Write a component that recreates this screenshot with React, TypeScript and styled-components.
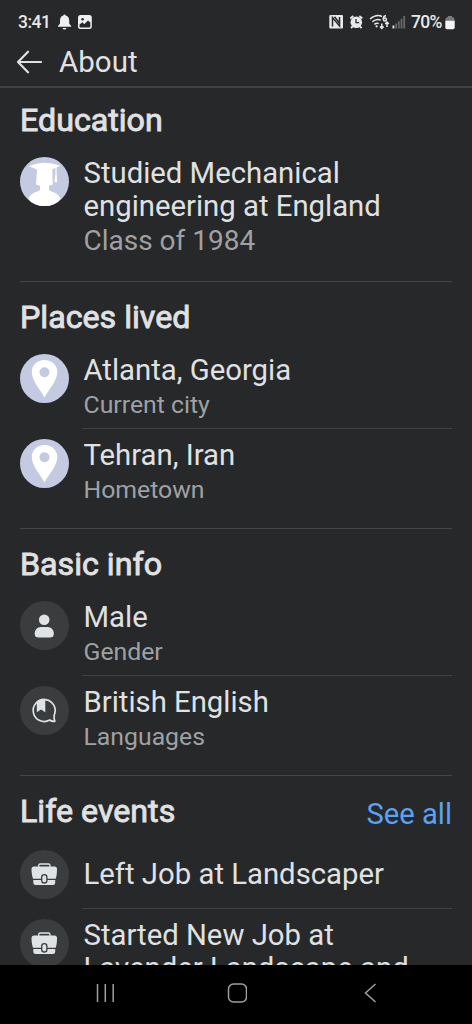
import React from "react";
import styled, { createGlobalStyle } from "styled-components";

const Global = createGlobalStyle`
  * { box-sizing: border-box; }
  body { margin: 0; background: #262829; font-family: Roboto, sans-serif; color: #e0e1e3; }
`;

const Screen = styled.div`
  width: 472px;
  height: 1024px;
  display: flex;
  flex-direction: column;
  overflow: hidden;
  background: #262829;
`;

const StatusBar = styled.div`
  height: 40px;
  flex: none;
  display: flex;
  align-items: center;
  justify-content: space-between;
  padding: 4px 17px 0 18px;
  font-size: 17.5px;
  font-weight: 500;
  color: #e8e9ea;
`;

const StatusGroup = styled.div`
  display: flex;
  align-items: center;
  svg { display: block; flex: none; }
`;

const StatusText = styled.span<{ $width: number; $gap: number; $spacing: number }>`
  width: ${(p) => p.$width}px;
  margin-right: ${(p) => p.$gap}px;
  letter-spacing: ${(p) => p.$spacing}px;
  white-space: nowrap;
`;

const Header = styled.header`
  height: 48px;
  flex: none;
  display: flex;
  align-items: center;
  gap: 17px;
  padding: 0 0 3px 16px;
  border-bottom: 2px solid #404244;
`;

const Title = styled.h1`
  margin: 0;
  font-size: 29.5px;
  font-weight: 400;
  line-height: 40px;
`;

const Content = styled.main`
  flex: 1;
  min-height: 0;
  overflow: hidden;
  padding: 0 20px;
`;

const Section = styled.section<{ $height: number; $first?: boolean }>`
  height: ${(p) => p.$height}px;
  border-top: ${(p) => (p.$first ? "none" : "1px solid #434547")};
  padding-top: ${(p) => (p.$first ? 12 : 15)}px;
`;

const SectionHead = styled.div`
  height: 40px;
  margin-bottom: 16.5px;
  display: flex;
  justify-content: space-between;
`;

const Heading = styled.h2`
  margin: 0;
  font-size: 32.2px;
  line-height: 40px;
  font-weight: 400;
  -webkit-text-stroke: 0.9px currentColor;
`;

const SeeAll = styled.a`
  font-size: 29.2px;
  line-height: 47px;
  color: #5aa2f3;
`;

const Row = styled.div<{ $height: number }>`
  height: ${(p) => p.$height}px;
  display: flex;
  gap: 13px;
`;

const IconCircle = styled.div<{ $light?: boolean; $drop?: number }>`
  width: 49px;
  height: 49px;
  margin-top: ${(p) => p.$drop ?? 0}px;
  flex: none;
  border-radius: 50%;
  overflow: hidden;
  background: ${(p) => (p.$light ? "#c3cae2" : "#3a3c3e")};
  svg { display: block; }
`;

const RowBody = styled.div<{ $divided?: boolean; $inset?: number }>`
  flex: 1;
  height: 100%;
  padding: ${(p) => p.$inset ?? 0}px 0 0 1.5px;
  border-bottom: ${(p) => (p.$divided ? "1px solid #404244" : "none")};
  white-space: nowrap;
`;

const Name = styled.div`
  font-size: 29.3px;
  line-height: 33px;
`;

const Detail = styled.div<{ $size?: number }>`
  margin-top: 3.5px;
  font-size: ${(p) => p.$size ?? 24.8}px;
  line-height: 30px;
  color: #9fa1a4;
`;

const RowGap = styled.div`
  height: 10px;
`;

const NavBar = styled.nav`
  height: 59px;
  flex: none;
  display: flex;
  align-items: center;
  justify-content: space-between;
  padding: 0 95px 3px 95px;
  background: #000;
`;

const Graduate = () => (
  <IconCircle $light>
    <svg width="49" height="49" viewBox="0 0 49 49">
      <path fill="#fff" d="M9 9.200Q17 5.700 24.500 5.700T40.300 8.800L32.300 12.200 32.800 27.500Q31 28.500 29 28.800V32.500C30 35.500 37 34 40.500 41.500L36 49H13L8.500 41.500C12 34 19 35.500 20 32.500V28.800Q18 28.500 16 27.500L17 12.500Z" />
      <path stroke="#fff" strokeWidth="1.200" fill="none" d="M36 9.500V20" />
      <path fill="#fff" d="M35.200 18H36.700L37.200 25.300H34.400Z" />
    </svg>
  </IconCircle>
);

const Pin = () => (
  <IconCircle $light>
    <svg width="49" height="49" viewBox="0 0 49 49">
      <path fill="#fff" fillRule="evenodd" d="M24.5 6C17 6 11.8 11.2 11.8 18C11.8 27 20 35 24.5 43.5C29 35 37.3 27 37.3 18C37.3 11.2 32 6 24.5 6ZM24.5 13.3A5 5 0 1 1 24.5 23.3A5 5 0 1 1 24.5 13.3Z" />
    </svg>
  </IconCircle>
);

const Person = () => (
  <IconCircle>
    <svg width="49" height="49" viewBox="0 0 49 49" fill="#e0e3e5">
      <circle cx="24.2" cy="18.8" r="5.3" />
      <path d="M21 26H27.5C31.5 26 33.8 29 33.8 32.5C33.8 35.500 32.500 36.500 30 36.500H18.500C16 36.500 14.700 35.500 14.700 32.500C14.700 29 17 26 21 26Z" />
    </svg>
  </IconCircle>
);

const Language = () => (
  <IconCircle>
    <svg width="49" height="49" viewBox="0 0 49 49">
      <path fill="none" stroke="#e0e3e5" strokeWidth="1.7" strokeLinejoin="round" d="M34.300 28.800A11 11 0 1 0 29.700 34C31 35.100 33 35.500 34.800 35.300C34.200 33.500 33.800 31 34.300 28.800Z" />
      <path fill="#e0e3e5" d="M16.800 15.500 21 13.300H25.300V26.200L21 23.500 16.800 26.200Z" />
    </svg>
  </IconCircle>
);

const Briefcase = ({ drop = 0 }: { drop?: number }) => (
  <IconCircle $drop={drop}>
    <svg width="49" height="49" viewBox="0 0 49 49">
      <path fill="none" stroke="#e0e3e5" strokeWidth="1.300" d="M18.700 17V15.500Q18.700 14 20.200 14H28.500Q30 14 30 15.500V17" />
      <path fill="#e0e3e5" d="M14 16.500H34.500Q37 16.500 37 19C37 23 36.700 26 35.700 28.700H13C12 26 11.500 23 11.500 19Q11.500 16.500 14 16.500Z" />
      <path fill="#e0e3e5" d="M13.300 29.900H35.200V32.700Q35.200 35 32.900 35H15.600Q13.300 35 13.300 32.700Z" />
      <rect x="21.700" y="24.700" width="5.200" height="8.300" rx="2.600" fill="#e0e3e5" stroke="#3a3c3e" strokeWidth="1.300" />
    </svg>
  </IconCircle>
);

const BackArrow = () => (
  <svg width="26" height="24" viewBox="0 0 26 24" fill="none" stroke="#e0e1e3" strokeWidth="2.200" strokeLinecap="round" strokeLinejoin="round">
    <path d="M12 1.700 2 12l10 10.300M2 12h23" />
  </svg>
);

const LeftStatusIcons = () => (
  <svg width="36" height="18" viewBox="0 0 36 18" fill="#eeeff0">
    <path d="M6.500 1.500Q7.500 1.500 7.700 2.600C10.500 3.400 11.200 5.500 11.200 8V10.500L13.200 13V13.800H0V13L2 10.500V8C2 5.500 2.700 3.400 5.300 2.600Q5.500 1.500 6.500 1.500ZM4.500 15H8.500Q8 16.600 6.500 16.600T4.500 15Z" />
    <rect x="20" y="2" width="13.800" height="14" rx="2.500" />
    <path d="M21.500 11.500 24.500 9.300 26.200 11.200 30 7.500 32.300 9.500V13.500Q32.300 14.500 31.300 14.500H22.500Q21.500 14.500 21.500 13.500Z" fill="#262829" />
    <circle cx="24.600" cy="6.300" r="1.300" fill="#262829" />
  </svg>
);

const RightStatusIcons = () => (
  <svg width="82" height="18" viewBox="0 0 82 18" fill="#e8e9ea">
    <rect x=".3" y="2" width="13.700" height="13.500" rx="1" />
    <path d="M3.500 13.500V4.500L10.500 13V4M5.500 3.800 11 10.700" fill="none" stroke="#262829" strokeWidth="1.500" />
    <circle cx="27.300" cy="9.300" r="5.800" />
    <path d="M21.300 5.600 24.300 3.100M30.300 3.100 33.300 5.600M23.600 13.500 22 15M31 13.500 32.600 15" stroke="#e8e9ea" strokeWidth="1.900" />
    <path d="M27 6V9.700H30.200" fill="none" stroke="#262829" strokeWidth="1.300" />
    <g fill="none" stroke="#e8e9ea" strokeWidth="1.500">
      <path d="M41 6Q47.500 .500 53 3.500M43.300 8.800Q47.700 5 51.700 7.200M45.400 11.400Q47.600 9.500 49.700 10.600" />
      <path d="M57 2.700Q54.300 2.700 54.300 6.300M52.800 10.500V15.500M51 13.600 52.800 15.500 54.600 13.600M58 14V9.200M56.200 10.900 58 9 59.800 10.900" />
      <circle cx="55.900" cy="6.500" r="1.500" />
    </g>
    <circle cx="47.600" cy="13.300" r="1.100" />
    <rect x="63.500" y="12.500" width="1.800" height="3" />
    <g fill="#66686a">
      <rect x="66.200" y="10.500" width="1.800" height="5" />
      <rect x="68.900" y="8.300" width="1.800" height="7.200" />
      <rect x="71.600" y="5.800" width="1.800" height="9.700" />
      <rect x="74.300" y="3" width="1.800" height="12.500" />
    </g>
  </svg>
);

const Battery = () => (
  <svg width="10" height="15" viewBox="0 0 10 15">
    <path fill="#77797b" d="M3 1H7V2Q9.500 2 9.500 4.500V6H.500V4.500Q.500 2 3 2Z" />
    <path fill="#f3f4f5" d="M.300 5.800H9.700V12.500Q9.700 14.300 8 14.300H2Q.300 14.300 .300 12.500Z" />
  </svg>
);

const NavIcon = styled.svg`
  display: block;
  fill: none;
  stroke: #a0a0a0;
  stroke-width: 1.500;
`;

export default function App() {
  return (
    <>
      <Global />
      <Screen>
        <StatusBar>
          <StatusGroup>
            <StatusText $width={31} $gap={9} $spacing={-0.5}>3:41</StatusText>
            <LeftStatusIcons />
          </StatusGroup>
          <StatusGroup>
            <RightStatusIcons />
            <StatusText $width={32} $gap={2} $spacing={-0.7}>70%</StatusText>
            <Battery />
          </StatusGroup>
        </StatusBar>
        <Header>
          <BackArrow />
          <Title>About</Title>
        </Header>
        <Content>
          <Section $height={193} $first>
            <SectionHead><Heading>Education</Heading></SectionHead>
            <Row $height={100}>
              <Graduate />
              <RowBody>
                <Name>Studied Mechanical<br />engineering at England</Name>
                <Detail $size={28}>Class of 1984</Detail>
              </RowBody>
            </Row>
          </Section>
          <Section $height={247}>
            <SectionHead><Heading>Places lived</Heading></SectionHead>
            <Row $height={75}>
              <Pin />
              <RowBody $divided>
                <Name>Atlanta, Georgia</Name>
                <Detail>Current city</Detail>
              </RowBody>
            </Row>
            <RowGap />
            <Row $height={75}>
              <Pin />
              <RowBody>
                <Name>Tehran, Iran</Name>
                <Detail>Hometown</Detail>
              </RowBody>
            </Row>
          </Section>
          <Section $height={247}>
            <SectionHead><Heading>Basic info</Heading></SectionHead>
            <Row $height={75}>
              <Person />
              <RowBody $divided>
                <Name>Male</Name>
                <Detail>Gender</Detail>
              </RowBody>
            </Row>
            <RowGap />
            <Row $height={75}>
              <Language />
              <RowBody>
                <Name>British English</Name>
                <Detail>Languages</Detail>
              </RowBody>
            </Row>
          </Section>
          <Section $height={247}>
            <SectionHead>
              <Heading>Life events</Heading>
              <SeeAll>See all</SeeAll>
            </SectionHead>
            <Row $height={61}>
              <Briefcase drop={2} />
              <RowBody $divided $inset={10.5}>
                <Name>Left Job at Landscaper</Name>
              </RowBody>
            </Row>
            <RowGap />
            <Row $height={75}>
              <Briefcase drop={0.5} />
              <RowBody>
                <Name>Started New Job at<br />Lavender Landscape and</Name>
              </RowBody>
            </Row>
          </Section>
        </Content>
        <NavBar>
          <NavIcon width="21" height="20" viewBox="0 0 21 20"><path d="M2.500 1V19M10.300 1V19M18.200 1V19" /></NavIcon>
          <NavIcon width="20" height="20" viewBox="0 0 20 20"><rect x="1.500" y="1" width="18" height="18" rx="5" /></NavIcon>
          <NavIcon width="20" height="20" viewBox="0 0 20 20"><path d="M18.500 1 8.500 10 18.500 19" /></NavIcon>
        </NavBar>
      </Screen>
    </>
  );
}
